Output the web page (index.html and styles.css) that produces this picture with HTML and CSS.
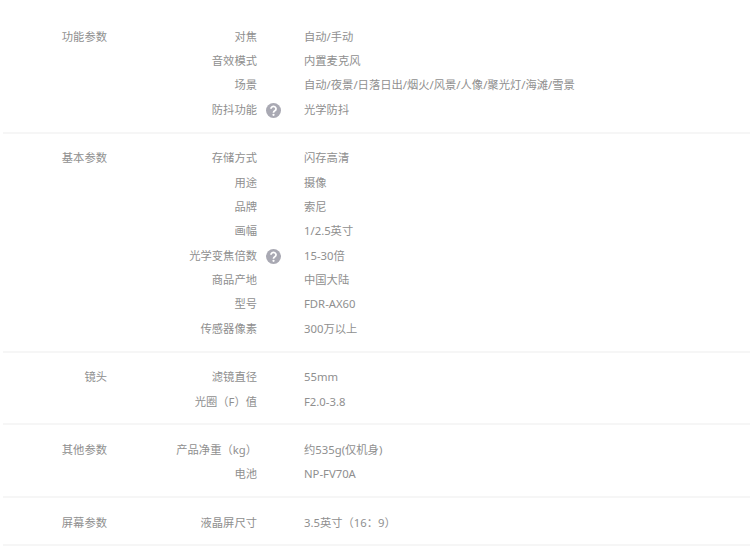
FILE: index.html
```html
<!DOCTYPE html>
<html lang="zh-CN">
<head>
<meta charset="utf-8">
<title>参数</title>
<link rel="stylesheet" href="styles.css">
</head>
<body>
<main class="specs">
  <section class="group">
    <h3 class="group-title">功能参数</h3>
    <dl class="rows">
      <div class="row"><dt class="key">对焦</dt><dd class="val">自动/手动</dd></div>
      <div class="row"><dt class="key">音效模式</dt><dd class="val">内置麦克风</dd></div>
      <div class="row"><dt class="key">场景</dt><dd class="val">自动/夜景/日落日出/烟火/风景/人像/聚光灯/海滩/雪景</dd></div>
      <div class="row"><dt class="key">防抖功能<svg class="help" viewBox="0 0 16 16"><circle cx="8" cy="8" r="8" fill="#a9a9b3"/><path d="M5.3 6.2a2.7 2.5 0 1 1 4.1 2.1c-.9.6-1.4 1-1.4 2" fill="none" stroke="#fff" stroke-width="1.9"/><circle cx="8" cy="12.6" r="1.2" fill="#fff"/></svg></dt><dd class="val">光学防抖</dd></div>
    </dl>
  </section>
  <section class="group">
    <h3 class="group-title">基本参数</h3>
    <dl class="rows">
      <div class="row"><dt class="key">存储方式</dt><dd class="val">闪存高清</dd></div>
      <div class="row"><dt class="key">用途</dt><dd class="val">摄像</dd></div>
      <div class="row"><dt class="key">品牌</dt><dd class="val">索尼</dd></div>
      <div class="row"><dt class="key">画幅</dt><dd class="val">1/2.5英寸</dd></div>
      <div class="row"><dt class="key">光学变焦倍数<svg class="help" viewBox="0 0 16 16"><circle cx="8" cy="8" r="8" fill="#a9a9b3"/><path d="M5.3 6.2a2.7 2.5 0 1 1 4.1 2.1c-.9.6-1.4 1-1.4 2" fill="none" stroke="#fff" stroke-width="1.9"/><circle cx="8" cy="12.6" r="1.2" fill="#fff"/></svg></dt><dd class="val">15-30倍</dd></div>
      <div class="row"><dt class="key">商品产地</dt><dd class="val">中国大陆</dd></div>
      <div class="row"><dt class="key">型号</dt><dd class="val">FDR-AX60</dd></div>
      <div class="row"><dt class="key">传感器像素</dt><dd class="val">300万以上</dd></div>
    </dl>
  </section>
  <section class="group">
    <h3 class="group-title">镜头</h3>
    <dl class="rows">
      <div class="row"><dt class="key">滤镜直径</dt><dd class="val">55mm</dd></div>
      <div class="row"><dt class="key">光圈（F）值</dt><dd class="val">F2.0-3.8</dd></div>
    </dl>
  </section>
  <section class="group">
    <h3 class="group-title">其他参数</h3>
    <dl class="rows">
      <div class="row"><dt class="key">产品净重（kg）</dt><dd class="val">约535g(仅机身)</dd></div>
      <div class="row"><dt class="key">电池</dt><dd class="val">NP-FV70A</dd></div>
    </dl>
  </section>
  <section class="group">
    <h3 class="group-title">屏幕参数</h3>
    <dl class="rows">
      <div class="row"><dt class="key">液晶屏尺寸</dt><dd class="val">3.5英寸（16：9）</dd></div>
    </dl>
  </section>
</main>
</body>
</html>
```

FILE: styles.css
```css
html, body {
  margin: 0;
  padding: 0;
  background: #fff;
}
body {
  font-family: "Noto Sans", "Noto Sans CJK SC", sans-serif;
  font-size: 11.3px;
  color: #8f8f8f;
  overflow: hidden;
}
.specs {
  padding: 12.2px 0 0 3px;
}
.group {
  display: flex;
  padding: 12.5px 0 9.4px;
  border-bottom: 2px solid #f6f6f6;
}
.group-title {
  width: 104px;
  margin: 0;
  font-size: inherit;
  font-weight: 400;
  line-height: 24.4px;
  text-align: right;
}
.rows {
  margin: 0;
  flex: 1;
}
.row {
  display: flex;
  height: 24.4px;
  line-height: 24.4px;
}
.key {
  position: relative;
  width: 150px;
  text-align: right;
}
.help {
  position: absolute;
  left: 159px;
  top: 5px;
  width: 15px;
  height: 15px;
}
.val {
  margin: 0 0 0 47px;
  white-space: nowrap;
}
```
